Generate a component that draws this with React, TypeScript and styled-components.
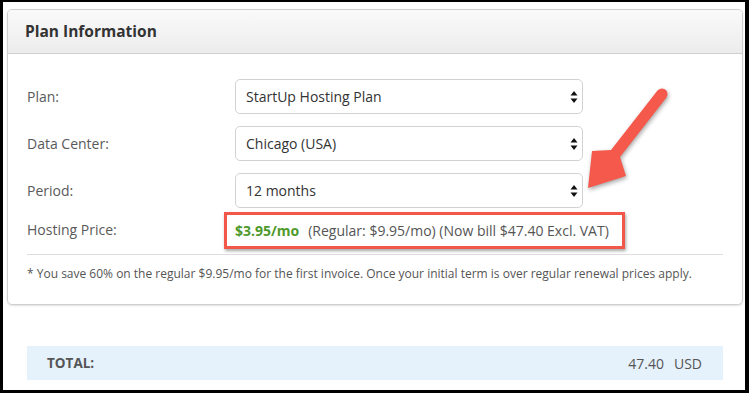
import React from 'react'
import styled, { createGlobalStyle } from 'styled-components'

const GlobalStyle = createGlobalStyle`
  html, body {
    margin: 0;
    padding: 0;
    background: #000;
  }
  body {
    font-family: "Open Sans", "Liberation Sans", Arial, sans-serif;
  }
`

const Frame = styled.div`
  position: relative;
  box-sizing: border-box;
  width: 742px;
  height: 388px;
  margin: 2px 0 0 3px;
  padding: 7px 0 0 4px;
  background: #fff;
  overflow: hidden;
`

const Panel = styled.section`
  box-sizing: border-box;
  width: 736px;
  height: 296px;
  border: 1px solid #cfcfcf;
  border-radius: 5px;
  box-shadow: 0 1px 2px rgba(0, 0, 0, 0.12);
  overflow: hidden;
`

const PanelHeader = styled.header`
  box-sizing: border-box;
  height: 44px;
  display: flex;
  align-items: center;
  padding: 0 0 2px 17px;
  background: linear-gradient(#fafafa, #ececec);
  border-bottom: 1px solid #cfcfcf;
  font-size: 15.5px;
  font-weight: 700;
  color: #333;
`

const PanelBody = styled.div`
  padding: 25px 19px 0 19px;
`

const Fields = styled.div`
  display: grid;
  grid-template-columns: 208px 348px;
  row-gap: 12px;
  align-items: center;
`

const Label = styled.div`
  font-size: 14px;
  color: #5a5a5a;
`

const SelectBox = styled.div`
  box-sizing: border-box;
  height: 35px;
  display: flex;
  align-items: center;
  justify-content: space-between;
  padding: 0 4px 0 10px;
  border: 1px solid #d2d2d2;
  border-radius: 5px;
  background: #fff;
  font-size: 14px;
  color: #333;
`

const PriceCell = styled.div`
  margin-top: -8px;
  height: 36px;
  display: flex;
  align-items: center;
`

const PriceLabel = styled(Label)`
  margin-top: -10px;
`

const Highlight = styled.span`
  box-sizing: border-box;
  height: 37px;
  display: inline-flex;
  align-items: center;
  margin-left: -11px;
  padding: 0 13px 0 8px;
  border: 3px solid #f2574a;
  box-shadow: 1px 2px 3px rgba(0, 0, 0, 0.35);
  font-size: 14px;
  color: #555;
  white-space: nowrap;
`

const Discount = styled.span`
  color: #4f9a2b;
  font-weight: 700;
  margin-right: 9px;
`

const Divider = styled.hr`
  margin: 6px 0 0 0;
  border: 0;
  border-top: 1px solid #dedede;
`

const Note = styled.p`
  margin: 10px 0 0 0;
  font-size: 12px;
  line-height: 18px;
  color: #555;
  white-space: nowrap;
`

const TotalBar = styled.div`
  box-sizing: border-box;
  width: 696px;
  height: 34px;
  margin: 41px 0 0 20px;
  display: flex;
  align-items: center;
  justify-content: space-between;
  padding: 0 21px 0 20px;
  background: #e5f1fb;
  color: #555;
`

const TotalLabel = styled.span`
  font-size: 13.5px;
  font-weight: 700;
`

const TotalAmount = styled.span`
  display: flex;
  gap: 10px;
  font-size: 14px;
`

const Annotation = styled.svg`
  position: absolute;
  left: 0;
  top: 0;
  pointer-events: none;
  filter: drop-shadow(1px 2px 2px rgba(0, 0, 0, 0.35));
`

const Caret = () => (
  <svg width="8" height="14" viewBox="0 0 8 14">
    <path d="M4 1 L7.5 5.5 H0.5 Z" fill="#111" />
    <path d="M4 13 L7.5 8.5 H0.5 Z" fill="#111" />
  </svg>
)

const Select = ({ value }: { value: string }) => (
  <SelectBox>
    <span>{value}</span>
    <Caret />
  </SelectBox>
)

export default function App() {
  return (
    <>
      <GlobalStyle />
      <Frame>
        <Panel>
          <PanelHeader>Plan Information</PanelHeader>
          <PanelBody>
            <Fields>
              <Label>Plan:</Label>
              <Select value="StartUp Hosting Plan" />
              <Label>Data Center:</Label>
              <Select value="Chicago (USA)" />
              <Label>Period:</Label>
              <Select value="12 months" />
              <PriceLabel>Hosting Price:</PriceLabel>
              <PriceCell>
                <Highlight>
                  <Discount>$3.95/mo</Discount>
                  (Regular: $9.95/mo) (Now bill $47.40 Excl. VAT)
                </Highlight>
              </PriceCell>
            </Fields>
            <Divider />
            <Note>
              * You save 60% on the regular $9.95/mo for the first invoice. Once your initial term is over regular renewal prices apply.
            </Note>
          </PanelBody>
        </Panel>
        <TotalBar>
          <TotalLabel>TOTAL:</TotalLabel>
          <TotalAmount>
            <span>47.40</span>
            <span>USD</span>
          </TotalAmount>
        </TotalBar>
        {/* arrow annotation drawn over the form, frame coords offset by (3,2) */}
        <Annotation width="742" height="388" viewBox="3 2 742 388">
          <circle cx="662" cy="94" r="5.5" fill="#f4594c" />
          <polygon
            points="666.5,97.5 620,157 626,176 588,188 592,151 611,150 657.5,90.5"
            fill="#f4594c"
          />
        </Annotation>
      </Frame>
    </>
  )
}
